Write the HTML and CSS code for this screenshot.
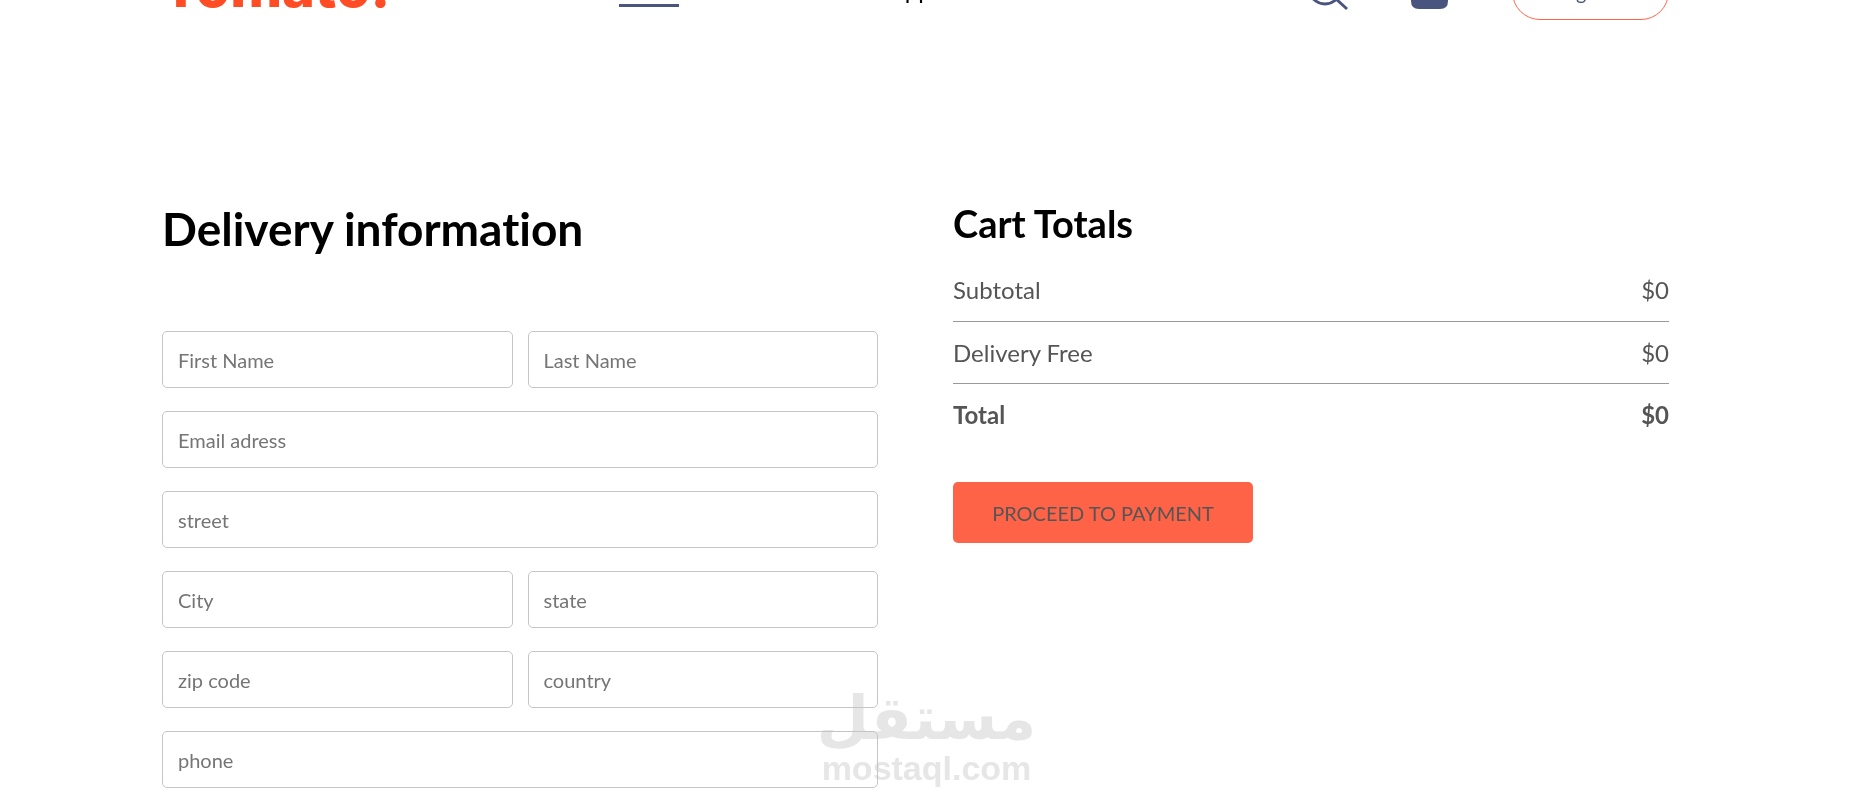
FILE: index.html
```
<!DOCTYPE html>
<html lang="en">
<head>
  <meta charset="UTF-8" />
  <meta name="viewport" content="width=device-width, initial-scale=1.0"/>
  <title>Tomato - Place Order</title>
  <link rel="stylesheet" href="styles.css">
</head>
<body>
  <div class="app">
    <header class="navbar">
      <a href="#" class="logo">Tomato.</a>
      <nav class="navbar-menu">
        <a href="#" class="active">home</a>
        <a href="#">menu</a>
        <a href="#">mobile app</a>
        <a href="#">contact us</a>
      </nav>
      <div class="navbar-right">
        <svg class="icon" viewBox="0 0 38 34" fill="none" stroke="#49557e" stroke-width="3">
          <circle cx="17" cy="13" r="16"/>
          <path d="M28 24l11 10"/>
        </svg>
        <svg class="icon" viewBox="0 0 38 34">
          <path d="M10 12l8-12M28 12l-8-12" stroke="#49557e" stroke-width="3"/>
          <path d="M1 10h37v16q0 8-8 8H9q-8 0-8-8z" fill="#49557e"/>
        </svg>
        <button type="button" class="sign-in">sign in</button>
      </div>
    </header>

    <form class="place-order">
      <div class="place-order-left">
        <h1>Delivery information</h1>
        <div class="fields">
          <input type="text" name="firstName" placeholder="First Name" aria-label="First Name" />
          <input type="text" name="lastName" placeholder="Last Name" aria-label="Last Name" />
          <input type="email" name="email" class="wide" placeholder="Email adress" aria-label="Email adress" />
          <input type="text" name="street" class="wide" placeholder="street" aria-label="street" />
          <input type="text" name="city" placeholder="City" aria-label="City" />
          <input type="text" name="state" placeholder="state" aria-label="state" />
          <input type="text" name="zip" placeholder="zip code" aria-label="zip code" />
          <input type="text" name="country" placeholder="country" aria-label="country" />
          <input type="tel" name="phone" class="wide" placeholder="phone" aria-label="phone" />
        </div>
      </div>

      <div class="place-order-right">
        <h2>Cart Totals</h2>
        <table>
          <tbody>
            <tr><td>Subtotal</td><td>$0</td></tr>
            <tr><td>Delivery Free</td><td>$0</td></tr>
            <tr class="total"><th scope="row">Total</th><td>$0</td></tr>
          </tbody>
        </table>
        <button type="submit" class="pay">PROCEED TO PAYMENT</button>
      </div>
    </form>
  </div>

  <div class="watermark">
    <span class="watermark-ar" lang="ar" dir="rtl">مستقل</span>
    <span class="watermark-en">mostaql.com</span>
  </div>
</body>
</html>
```
FILE: styles.css
```
* { box-sizing: border-box; margin: 0; padding: 0; }
html { overflow: hidden; }
body {
  font-family: Lato, sans-serif;
  font-variant-ligatures: none;
  background: #fff;
  color: #000;
}
a { color: inherit; text-decoration: none; }
.app { padding: 0 184px 0 162px; }

/* the bar is mostly scrolled off the top */
.navbar {
  display: flex;
  align-items: center;
  justify-content: space-between;
  height: 56px;
  margin-top: -36px;
}
.logo {
  align-self: flex-start;
  font: 800 56px/46px Inter, sans-serif;
  color: #ff4c24;
}
.navbar-menu { display: flex; gap: 39px; font-size: 24px; color: #000; }
.navbar-menu a { height: 30px; line-height: 26px; }
.navbar-menu .active { border-bottom: 3px solid #49557e; }
.navbar-right { display: flex; align-items: center; gap: 64px; }
.icon { width: 38px; height: 34px; overflow: visible; }
.sign-in {
  width: 157px;
  height: 56px;
  border: 1px solid tomato;
  border-radius: 62px;
  background: transparent;
  font: 20px Lato, sans-serif;
  color: #49557e;
}

.place-order {
  display: grid;
  grid-template-columns: 1fr 1fr;
  gap: 75px;
  align-items: start;
  margin-top: 181px;
}
h1 { font-size: 46px; line-height: 56px; font-weight: 700; margin-bottom: 74px; }
.fields { display: grid; grid-template-columns: 1fr 1fr; gap: 23px 15px; }
.fields input {
  width: 100%;
  height: 57px;
  padding: 0 15px;
  border: 1px solid #c5c5c5;
  border-radius: 5px;
  background: transparent;
  font: 20px Lato, sans-serif;
}
.fields input::placeholder { color: #757575; }
.fields .wide { grid-column: 1 / -1; }

h2 { font-size: 38px; line-height: 44px; font-weight: 700; margin-bottom: 14px; }
table { width: 100%; border-collapse: collapse; font-size: 24px; color: #555; }
tr { height: 62px; border-bottom: 1px solid #9a9a9a; }
tr.total { border-bottom: none; font-weight: 700; }
th { text-align: left; }
td:last-child { text-align: right; }
.pay {
  width: 300px;
  height: 61px;
  margin-top: 37px;
  border: none;
  border-radius: 5px;
  background: tomato;
  font: 20px Lato, sans-serif;
  color: #555;
}

.watermark {
  position: fixed;
  left: 0;
  right: 0;
  bottom: 16px;
  z-index: -1;
  display: flex;
  flex-direction: column;
  align-items: center;
  font-weight: 700;
  color: #e6e6e6;
}
.watermark-ar { font-family: "DejaVu Sans", sans-serif; font-size: 60px; line-height: 64px; }
.watermark-en { font-family: "Liberation Sans", sans-serif; font-size: 34px; line-height: 36px; }
```
